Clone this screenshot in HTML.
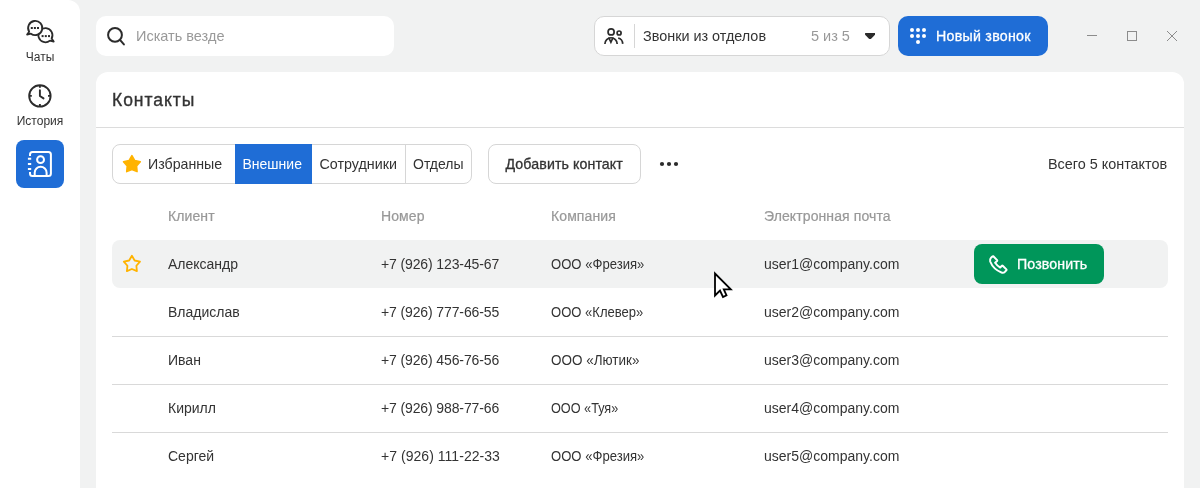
<!DOCTYPE html>
<html><head><meta charset="utf-8">
<style>
*{box-sizing:border-box;margin:0;padding:0}
html,body{-webkit-font-smoothing:antialiased;width:1200px;height:488px;overflow:hidden;background:#f1f2f2;font-family:"Liberation Sans",sans-serif;color:#333}
.abs{position:absolute}
.sidebar{position:absolute;left:0;top:0;width:80px;height:488px;background:#fff;border-top-right-radius:12px}
.navlbl{position:absolute;left:0;width:80px;text-align:center;font-size:12px;color:#333;white-space:nowrap}
.navact{position:absolute;left:16px;top:140px;width:48px;height:48px;border-radius:8px;background:#1f6dd6}
.search{position:absolute;left:96px;top:16px;width:298px;height:40px;background:#fff;border-radius:10px}
.ph{position:absolute;left:137px;top:0;line-height:72px;font-size:14px;color:#999;white-space:nowrap}
.dd{position:absolute;left:594px;top:16px;width:296px;height:40px;background:#fff;border:1px solid #d6d6d6;border-radius:10px}
.newcall{position:absolute;left:898px;top:16px;width:150px;height:40px;background:#1f6dd6;border-radius:10px;color:#fff}
.card{position:absolute;left:96px;top:72px;width:1088px;height:430px;background:#fff;border-radius:12px}
.t{position:absolute;white-space:nowrap}
.hdr{position:absolute;top:208px;font-size:14px;color:#999;-webkit-text-stroke:0.22px #999;letter-spacing:0.1px;white-space:nowrap}
.cell{position:absolute;font-size:14px;color:#333;white-space:nowrap}
.line{position:absolute;left:112px;width:1056px;height:1px;background:#d9d9d9}
</style></head><body><div style="position:absolute;left:0;top:0;width:1200px;height:488px;will-change:transform">
<div class="sidebar"></div>
<div class="navlbl" style="top:50px">Чаты</div>
<div class="navlbl" style="top:114px">История</div>
<div class="navact"></div>

<div class="search"></div>
<div class="t" style="left:136px;top:28px;font-size:14.5px;color:#999">Искать везде</div>

<div class="dd"></div>
<div class="t" style="left:643px;top:28px;font-size:14.4px;color:#333">Звонки из отделов</div>
<div class="t" style="left:811px;top:28px;font-size:14.5px;color:#999">5 из 5</div>

<div class="newcall"></div>
<div class="t" style="left:936px;top:28px;font-size:14.2px;color:#fff;-webkit-text-stroke:0.3px #fff;letter-spacing:0.27px">Новый звонок</div>

<div class="card"></div>
<div class="t" style="left:112px;top:90px;font-size:17.5px;-webkit-text-stroke:0.35px #333;letter-spacing:0.95px">Контакты</div>
<div class="abs" style="left:96px;top:127px;width:1088px;height:1px;background:#dcdcdc"></div>

<div class="abs" style="left:112px;top:144px;width:360px;height:40px;border:1px solid #d6d6d6;border-radius:8px;background:#fff"></div>
<div class="abs" style="left:235px;top:144px;width:77px;height:40px;background:#1f6dd6"></div>
<div class="abs" style="left:405px;top:145px;width:1px;height:38px;background:#d6d6d6"></div>
<div class="abs" style="left:488px;top:144px;width:153px;height:40px;border:1px solid #d6d6d6;border-radius:8px;background:#fff"></div>
<svg class="abs" style="left:0;top:0" width="1200" height="488" viewBox="0 0 1200 488">
 <g fill="#2b2b2b"><circle cx="662" cy="164" r="2.1"/><circle cx="669" cy="164" r="2.1"/><circle cx="676" cy="164" r="2.1"/></g>
</svg>
<div class="t" style="left:148px;top:156px;font-size:14.2px">Избранные</div>
<div class="t" style="left:242.5px;top:156px;font-size:14px;color:#fff">Внешние</div>
<div class="t" style="left:319.5px;top:156px;font-size:14.3px">Сотрудники</div>
<div class="t" style="left:413px;top:156px;font-size:14px">Отделы</div>
<div class="t" style="left:505.5px;top:156px;font-size:14.2px;-webkit-text-stroke:0.3px #333;letter-spacing:0.1px">Добавить контакт</div>
<div class="t" style="left:1048px;top:156px;font-size:14.4px">Всего 5 контактов</div>

<div class="hdr" style="left:168px">Клиент</div>
<div class="hdr" style="left:381px">Номер</div>
<div class="hdr" style="left:551px">Компания</div>
<div class="hdr" style="left:764px">Электронная почта</div>

<div class="abs" style="left:112px;top:240px;width:1056px;height:48px;background:#f1f2f2;border-radius:8px"></div>
<div class="line" style="top:336px"></div>
<div class="line" style="top:384px"></div>
<div class="line" style="top:432px"></div>

<div class="cell" style="left:168px;top:256px">Александр</div>
<div class="cell" style="left:381px;top:256px;letter-spacing:-0.12px">+7 (926) 123-45-67</div>
<div class="cell" style="left:551px;top:256px;transform:scaleX(0.935);transform-origin:0 50%">ООО «Фрезия»</div>
<div class="cell" style="left:764px;top:256px">user1@company.com</div>

<div class="cell" style="left:168px;top:304px">Владислав</div>
<div class="cell" style="left:381px;top:304px;letter-spacing:-0.12px">+7 (926) 777-66-55</div>
<div class="cell" style="left:551px;top:304px;transform:scaleX(0.932);transform-origin:0 50%">ООО «Клевер»</div>
<div class="cell" style="left:764px;top:304px">user2@company.com</div>

<div class="cell" style="left:168px;top:352px">Иван</div>
<div class="cell" style="left:381px;top:352px;letter-spacing:-0.12px">+7 (926) 456-76-56</div>
<div class="cell" style="left:551px;top:352px;transform:scaleX(0.962);transform-origin:0 50%">ООО «Лютик»</div>
<div class="cell" style="left:764px;top:352px">user3@company.com</div>

<div class="cell" style="left:168px;top:400px">Кирилл</div>
<div class="cell" style="left:381px;top:400px;letter-spacing:-0.12px">+7 (926) 988-77-66</div>
<div class="cell" style="left:551px;top:400px;transform:scaleX(0.905);transform-origin:0 50%">ООО «Туя»</div>
<div class="cell" style="left:764px;top:400px">user4@company.com</div>

<div class="cell" style="left:168px;top:448px">Сергей</div>
<div class="cell" style="left:381px;top:448px;letter-spacing:0.04px">+7 (926) 111-22-33</div>
<div class="cell" style="left:551px;top:448px;transform:scaleX(0.935);transform-origin:0 50%">ООО «Фрезия»</div>
<div class="cell" style="left:764px;top:448px">user5@company.com</div>

<div class="abs" style="left:974px;top:244px;width:130px;height:40px;background:#00965a;border-radius:8px"></div>
<div class="t" style="left:1017px;top:256px;font-size:14.2px;color:#fff;-webkit-text-stroke:0.3px #fff;letter-spacing:0.1px">Позвонить</div>

<svg class="abs" style="left:0;top:0" width="1200" height="488" viewBox="0 0 1200 488" fill="none">
 <!-- chats icon -->
 <g stroke="#2b2b2b" stroke-width="1.8" stroke-linejoin="round" fill="#fff">
  <path d="M51.62,38.51 A7.05,7.05 0 1 0 49.93,40.6 L53.7,41.5 Z"/>
  <path d="M30.93,33.67 A7.1,7.1 0 1 0 29.18,31.76 L27.1,34.6 Z"/>
 </g>
 <g fill="#2b2b2b">
  <rect x="30.8" y="27" width="2" height="2"/><rect x="33.9" y="27" width="2" height="2"/><rect x="37" y="27" width="2" height="2"/>
  <rect x="41.6" y="35.1" width="2" height="2"/><rect x="44.8" y="35.1" width="2" height="2"/><rect x="48" y="35.1" width="2" height="2"/>
 </g>
 <!-- history icon -->
 <g stroke="#2b2b2b" stroke-width="1.9" fill="none" stroke-linecap="butt" stroke-linejoin="round">
  <circle cx="39.9" cy="95.9" r="10.7"/>
  <path d="M39.9,85.6V87.8 M39.9,104V106.2 M29.6,95.9H31.8 M48,95.9H50.2"/>
  <path d="M39.9,90.3V96 L43.5,98.4" stroke-linecap="round"/>
 </g>
 <!-- contacts icon -->
 <g stroke="#fff" stroke-width="2" fill="none">
  <path d="M30,156 V154.5 A2.5,2.5 0 0 1 32.5,152 H48.4 A2.5,2.5 0 0 1 50.9,154.5 V173.4 A2.5,2.5 0 0 1 48.4,175.9 H32.5 A2.5,2.5 0 0 1 30,173.4 V172"/>
  <path d="M27.9,158.8H31.2 M27.9,163.9H31.2 M27.9,169H31.2"/>
  <circle cx="40.55" cy="159.65" r="3.45"/>
  <path d="M34.7,175.9 V172.7 A5.95,5.95 0 0 1 46.6,172.7 V175.9"/>
 </g>
 <!-- search icon -->
 <g stroke="#2b2b2b" stroke-width="2" fill="none" stroke-linecap="round">
  <circle cx="115" cy="34.9" r="6.9"/>
  <path d="M120.2,40.1 L123.9,44.4"/>
 </g>
 <!-- group icon -->
 <g stroke="#2b2b2b" stroke-width="1.7" fill="none">
  <circle cx="611.1" cy="31.9" r="3.05"/>
  <circle cx="619.1" cy="33" r="2"/>
  <path d="M604.9,43.9 A6.15,6.15 0 0 1 617.2,43.9"/>
  <path d="M608.7,37.5 L610.9,42.2 L613.1,37.5"/>
  <path d="M618.2,38.1 A5.3,5.6 0 0 1 622.6,43.9"/>
 </g>
 <rect x="634" y="24" width="1" height="24" fill="#d6d6d6"/>
 <!-- dropdown arrow -->
 <path d="M865.1,33.1 H875 V34.7 L871.4,38.5 Q870.05,39.6 868.7,38.5 L865.1,34.7 Z" fill="#2b2b2b"/>
 <!-- dialpad -->
 <g fill="#fff">
  <circle cx="912" cy="30" r="2"/><circle cx="918" cy="30" r="2"/><circle cx="924" cy="30" r="2"/>
  <circle cx="912" cy="36" r="2"/><circle cx="918" cy="36" r="2"/><circle cx="924" cy="36" r="2"/>
  <circle cx="918" cy="42" r="2"/>
 </g>
 <!-- window controls -->
 <g stroke="#8c8c8c" stroke-width="1" fill="none">
  <path d="M1087,35.5H1097"/>
  <rect x="1127.5" y="31.5" width="9" height="9"/>
  <path d="M1167,31 L1177,41 M1177,31 L1167,41"/>
 </g>
</svg>

<svg class="abs" style="left:0;top:0" width="1200" height="488" viewBox="0 0 1200 488" fill="none">
 <!-- filled star -->
 <path d="M131.90,155.70 L134.78,160.54 L140.27,161.78 L136.56,166.01 L137.07,171.62 L131.90,169.40 L126.73,171.62 L127.24,166.01 L123.53,161.78 L129.02,160.54 Z" fill="#ffb300" stroke="#ffb300" stroke-width="1.6" stroke-linejoin="round"/>
 <!-- outline star -->
 <path d="M131.90,255.80 L134.66,260.50 L139.98,261.67 L136.37,265.75 L136.90,271.18 L131.90,269.00 L126.90,271.18 L127.43,265.75 L123.82,261.67 L129.14,260.50 Z" fill="none" stroke="#ffb300" stroke-width="1.8" stroke-linejoin="round"/>
 <!-- phone -->
 <path d="M993.3,256.2 L997.1,260.1 Q997.5,260.6 997.1,261 L995.1,262.8 Q997.2,265.9 1000.2,267.5 L1001.9,265.8 Q1002.3,265.4 1002.7,265.8 L1006.4,269.4 Q1006.8,269.8 1006.4,270.3 L1004.8,271.9 Q1003.5,273.1 1001.5,272.5 Q993.2,269.2 990.2,261.5 Q989.6,259.3 990.9,257.9 L991.8,257 Q992.5,256.3 993.3,256.2 Z" stroke="#fff" stroke-width="2" stroke-linejoin="round"/>
 <!-- cursor -->
 <path d="M715,273.5 L715,295.5 L720,290.5 L723,297 L726.5,295.3 L723.8,289.4 L730.8,289.4 Z" fill="#fff" stroke="#000" stroke-width="1.8" stroke-linejoin="miter"/>
</svg>
</div></body></html>
